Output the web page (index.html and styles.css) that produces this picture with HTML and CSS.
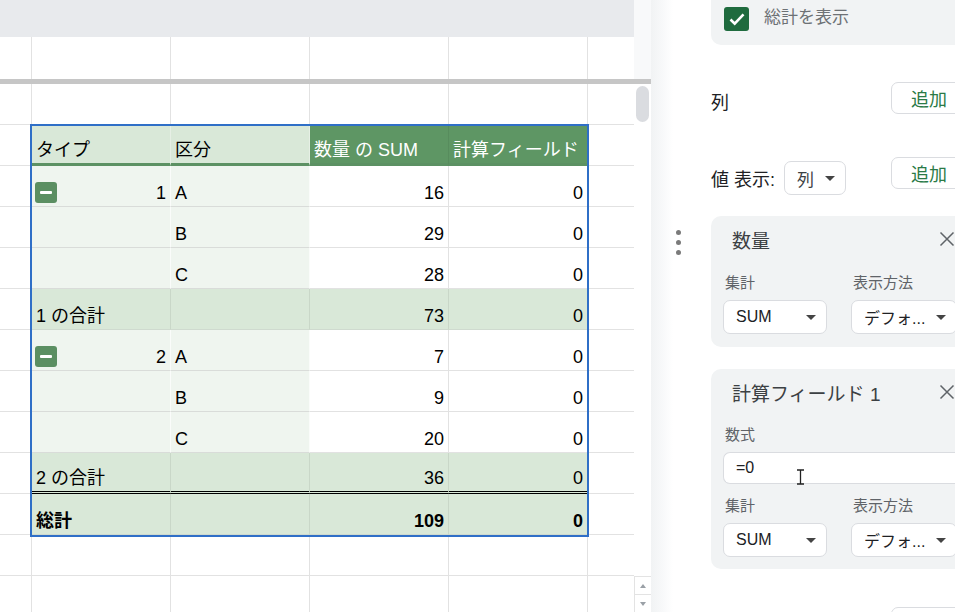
FILE: index.html
```html
<!DOCTYPE html>
<html lang="ja">
<head>
    <meta charset="UTF-8">
    <meta name="viewport" content="width=device-width, initial-scale=1.0">
    <title>ピボット テーブル</title>
    <link rel="stylesheet" href="styles.css">
</head>
<body>
    <div class="sheet">
        <div class="frozen">
            <div class="frozen-grid">
                <div class="band"></div>
                <div class="row first">
                    <div class="cell c0"></div>
                    <div class="cell c1"></div>
                    <div class="cell c2"></div>
                    <div class="cell c3"></div>
                    <div class="cell c4"></div>
                    <div class="cell c5"></div>
                </div>
            </div>
            <div class="scroll-gap"></div>
        </div>
        <div class="freeze-bar"></div>

        <div class="pane">
            <div class="grid">
                <div class="row">
                    <div class="cell c0"></div><div class="cell c1"></div><div class="cell c2"></div>
                    <div class="cell c3"></div><div class="cell c4"></div><div class="cell c5"></div>
                </div>

                <!-- pivot header -->
                <div class="row">
                    <div class="cell c0"></div>
                    <div class="cell c1 hl">タイプ</div>
                    <div class="cell c2 hl">区分</div>
                    <div class="cell c3 hd">数量 の SUM</div>
                    <div class="cell c4 hd">計算フィールド</div>
                    <div class="cell c5"></div>
                </div>

                <div class="row">
                    <div class="cell c0"></div>
                    <div class="cell c1 dim group"><span class="toggle"><i></i></span><span>1</span></div>
                    <div class="cell c2 dim">A</div>
                    <div class="cell c3 num">16</div>
                    <div class="cell c4 num">0</div>
                    <div class="cell c5"></div>
                </div>
                <div class="row">
                    <div class="cell c0"></div>
                    <div class="cell c1 dim"></div>
                    <div class="cell c2 dim">B</div>
                    <div class="cell c3 num">29</div>
                    <div class="cell c4 num">0</div>
                    <div class="cell c5"></div>
                </div>
                <div class="row">
                    <div class="cell c0"></div>
                    <div class="cell c1 dim"></div>
                    <div class="cell c2 dim">C</div>
                    <div class="cell c3 num">28</div>
                    <div class="cell c4 num">0</div>
                    <div class="cell c5"></div>
                </div>
                <div class="row">
                    <div class="cell c0"></div>
                    <div class="cell c1 sub">1 の合計</div>
                    <div class="cell c2 sub"></div>
                    <div class="cell c3 sub num">73</div>
                    <div class="cell c4 sub num">0</div>
                    <div class="cell c5"></div>
                </div>

                <div class="row">
                    <div class="cell c0"></div>
                    <div class="cell c1 dim group"><span class="toggle"><i></i></span><span>2</span></div>
                    <div class="cell c2 dim">A</div>
                    <div class="cell c3 num">7</div>
                    <div class="cell c4 num">0</div>
                    <div class="cell c5"></div>
                </div>
                <div class="row">
                    <div class="cell c0"></div>
                    <div class="cell c1 dim"></div>
                    <div class="cell c2 dim">B</div>
                    <div class="cell c3 num">9</div>
                    <div class="cell c4 num">0</div>
                    <div class="cell c5"></div>
                </div>
                <div class="row">
                    <div class="cell c0"></div>
                    <div class="cell c1 dim"></div>
                    <div class="cell c2 dim">C</div>
                    <div class="cell c3 num">20</div>
                    <div class="cell c4 num">0</div>
                    <div class="cell c5"></div>
                </div>
                <div class="row">
                    <div class="cell c0"></div>
                    <div class="cell c1 sub last-sub">2 の合計</div>
                    <div class="cell c2 sub last-sub"></div>
                    <div class="cell c3 sub last-sub num">36</div>
                    <div class="cell c4 sub last-sub num">0</div>
                    <div class="cell c5"></div>
                </div>
                <div class="row bold">
                    <div class="cell c0"></div>
                    <div class="cell c1 sub">総計</div>
                    <div class="cell c2 sub"></div>
                    <div class="cell c3 sub num">109</div>
                    <div class="cell c4 sub num">0</div>
                    <div class="cell c5"></div>
                </div>

                <div class="row">
                    <div class="cell c0"></div><div class="cell c1"></div><div class="cell c2"></div>
                    <div class="cell c3"></div><div class="cell c4"></div><div class="cell c5"></div>
                </div>
                <div class="row">
                    <div class="cell c0"></div><div class="cell c1"></div><div class="cell c2"></div>
                    <div class="cell c3"></div><div class="cell c4"></div><div class="cell c5"></div>
                </div>

                <div class="selection"></div>
            </div>

            <div class="vscroll">
                <div class="thumb"></div>
                <div class="arrows">
                    <span class="arrow up"></span>
                    <span class="arrow down"></span>
                </div>
            </div>
        </div>
    </div>

    <div class="sidebar">
        <div class="handle">
            <span></span><span></span><span></span>
        </div>

        <div class="panel">
            <div class="totals-card">
                <span class="checkbox">
                    <svg width="20" height="20" viewBox="0 0 20 20"><path d="M3.5 10.5l4.2 4.2 8.8-9.4" fill="none" stroke="#fff" stroke-width="2.6"/></svg>
                </span>
                <span class="totals-label">総計を表示</span>
            </div>

            <div class="section-row cols-row">
                <span class="section-title">列</span>
                <button class="add-btn">追加</button>
            </div>

            <div class="section-row values-row">
                <div class="values-left">
                    <span class="section-title">値 表示:</span>
                    <span class="select small">列
                        <svg class="caret" width="10" height="5" viewBox="0 0 10 5"><path d="M0 0h10L5 5z"/></svg>
                    </span>
                </div>
                <button class="add-btn">追加</button>
            </div>

            <div class="field-card">
                <div class="card-head">
                    <span class="card-title">数量</span>
                    <svg class="close" width="16" height="16" viewBox="0 0 16 16"><path d="M1.5 1.5L14.5 14.5M14.5 1.5L1.5 14.5" stroke="#5f6368" stroke-width="1.5"/></svg>
                </div>
                <div class="field-grid">
                    <span class="field-label">集計</span>
                    <span class="field-label">表示方法</span>
                    <span class="select">SUM
                        <svg class="caret" width="10" height="5" viewBox="0 0 10 5"><path d="M0 0h10L5 5z"/></svg>
                    </span>
                    <span class="select">デフォ...
                        <svg class="caret" width="10" height="5" viewBox="0 0 10 5"><path d="M0 0h10L5 5z"/></svg>
                    </span>
                </div>
            </div>

            <div class="field-card calc">
                <div class="card-head">
                    <span class="card-title">計算フィールド 1</span>
                    <svg class="close" width="16" height="16" viewBox="0 0 16 16"><path d="M1.5 1.5L14.5 14.5M14.5 1.5L1.5 14.5" stroke="#5f6368" stroke-width="1.5"/></svg>
                </div>
                <span class="field-label formula-label">数式</span>
                <div class="formula">=0
                    <svg class="ibeam" width="9" height="16" viewBox="0 0 9 16"><path d="M1 1h7M4.5 1v14M1 15h7" stroke="#222" stroke-width="1.3" fill="none"/></svg>
                </div>
                <div class="field-grid">
                    <span class="field-label">集計</span>
                    <span class="field-label">表示方法</span>
                    <span class="select">SUM
                        <svg class="caret" width="10" height="5" viewBox="0 0 10 5"><path d="M0 0h10L5 5z"/></svg>
                    </span>
                    <span class="select">デフォ...
                        <svg class="caret" width="10" height="5" viewBox="0 0 10 5"><path d="M0 0h10L5 5z"/></svg>
                    </span>
                </div>
            </div>

            <!-- next section's button, scrolled below the fold -->
            <div class="section-row filter-row">
                <button class="add-btn" aria-label="追加"></button>
            </div>
        </div>
    </div>
</body>
</html>
```

FILE: styles.css
```css
* {
    box-sizing: border-box;
}

body {
    margin: 0;
    width: 955px;
    height: 612px;
    overflow: hidden;
    display: flex;
    background: #fff;
    color: #000;
    font-family: "Liberation Sans", "Noto Sans CJK JP", sans-serif;
}

/* ---------- sheet ---------- */

.sheet {
    width: 651px;
    flex: none;
    display: flex;
    flex-direction: column;
}

.frozen {
    display: flex;
}

.frozen-grid {
    width: 634px;
}

.scroll-gap {
    width: 17px;
    background: #f8f9fa;
}

.band {
    height: 37px;
    background: #e8eaed;
}

.freeze-bar {
    height: 5px;
    background: #c6c6c6;
}

.pane {
    display: flex;
    flex: 1;
    min-height: 0;
}

.grid {
    width: 634px;
    position: relative;
    overflow: hidden;
}

.row {
    display: flex;
    height: 41px;
}

.row.first {
    height: 42px;
}

.row.first .cell {
    border-bottom: none;
}

.cell {
    flex: none;
    height: 100%;
    display: flex;
    align-items: flex-end;
    padding: 0 4px 3px 4px;
    border-right: 1px solid #e2e2e2;
    border-bottom: 1px solid #e2e2e2;
    font-size: 18px;
    line-height: 20px;
    white-space: nowrap;
    overflow: hidden;
}

.c0 { width: 32px; }
.c1, .c2, .c3, .c4 { width: 139px; }
.c5 { width: 46px; border-right: none; }

.num {
    justify-content: flex-end;
}

.hl {
    background: #d9e8d8;
    border-right-color: #e6efe5;
    border-bottom: 3px solid #5c9163;
}

.hd {
    background: #5e9664;
    color: #fff;
    border-right-color: #578c5d;
    border-bottom: 3px solid #5c9163;
}

.dim {
    background: #eff5ef;
    border-right-color: #fafcfa;
    border-bottom-color: #d9dcd9;
}

.sub {
    background: #d9e8d8;
    border-right-color: #c9d7c8;
    border-bottom-color: #cfdacf;
}

.sub.last-sub {
    border-bottom: 3px double #000;
}

.bold {
    font-weight: 700;
}

.group {
    justify-content: space-between;
    padding-left: 3px;
}

.toggle {
    margin-bottom: 0;
    width: 22px;
    height: 21px;
    border-radius: 3px;
    background: #5b8f62;
    display: flex;
    align-items: center;
    justify-content: center;
}

.toggle i {
    width: 12px;
    height: 3px;
    border-radius: 1px;
    background: #fff;
}

.selection {
    position: absolute;
    left: 30px;
    top: 40px;
    width: 559px;
    height: 413px;
    border: 2px solid #2f6fc7;
    pointer-events: none;
}

.vscroll {
    width: 17px;
    display: flex;
    flex-direction: column;
    background: #fff;
}

.thumb {
    margin: 2px 0 0 2px;
    width: 13px;
    height: 36px;
    border-radius: 7px;
    background: #dadce0;
}

.arrows {
    margin-top: auto;
    height: 36px;
    border-top: 1px solid #e3e3e3;
    border-left: 1px solid #e3e3e3;
    display: flex;
    flex-direction: column;
}

.arrow {
    flex: 1;
    position: relative;
}

.arrow.up {
    border-bottom: 1px solid #e3e3e3;
}

.arrow::after {
    content: "";
    position: absolute;
    left: 5px;
    top: 7px;
    border-left: 3px solid transparent;
    border-right: 3px solid transparent;
}

.arrow.up::after {
    border-bottom: 4px solid #9aa0a6;
}

.arrow.down::after {
    border-top: 4px solid #9aa0a6;
}

/* ---------- sidebar ---------- */

.sidebar {
    flex: 1;
    display: flex;
    overflow: hidden;
    background: linear-gradient(to right, #f1f3f4 0, #f8f9fa 12px, #fff 22px);
}

.handle {
    width: 60px;
    flex: none;
    padding: 230px 0 0 25px;
    display: flex;
    flex-direction: column;
    gap: 5px;
}

.handle span {
    width: 5px;
    height: 5px;
    border-radius: 50%;
    background: #7a7a7a;
}

.panel {
    width: 270px;
    flex: none;
    color: #202124;
}

.totals-card {
    height: 45px;
    padding: 7px 0 0 13px;
    display: flex;
    align-items: flex-start;
    gap: 15px;
    background: #f1f3f4;
    border-radius: 0 0 0 10px;
}

.checkbox {
    width: 25px;
    height: 24px;
    border-radius: 3px;
    background: #1f6b3e;
    display: flex;
    align-items: center;
    justify-content: center;
}

.totals-label {
    font-size: 17px;
    line-height: 22px;
    color: #6d7175;
}

.section-row {
    display: flex;
    justify-content: space-between;
}

.cols-row {
    margin-top: 37px;
    align-items: center;
}

.section-title {
    font-size: 18px;
    color: #202124;
}

.cols-row .section-title {
    padding-top: 5px;
}

.add-btn {
    width: 90px;
    height: 32px;
    padding: 0 0 0 19px;
    text-align: left;
    font: inherit;
    font-size: 18px;
    color: #2b7a47;
    background: #fff;
    border: 1px solid #dadce0;
    border-radius: 7px;
}

.values-row {
    margin-top: 43px;
    align-items: flex-start;
}

.values-left {
    margin-top: 4px;
    display: flex;
    align-items: center;
    gap: 9px;
}

.select {
    height: 34px;
    display: flex;
    align-items: center;
    justify-content: space-between;
    padding: 0 10px 0 12px;
    background: #fff;
    border: 1px solid #dadce0;
    border-radius: 7px;
    font-size: 16px;
    color: #202124;
}

.select.small {
    width: 62px;
    font-size: 17px;
    color: #3c4043;
}

.caret {
    fill: #444;
}

.field-card {
    margin-top: 21px;
    padding: 12px 0 13px 12px;
    background: #f1f3f4;
    border-radius: 10px 0 0 10px;
}

.field-card.calc {
    margin-top: 22px;
    padding-bottom: 12px;
}

.card-head {
    height: 22px;
    display: flex;
    align-items: center;
    justify-content: space-between;
    padding: 0 26px 0 9px;
}

.card-title {
    font-size: 19px;
    color: #3c4043;
}

.field-grid {
    margin-top: 24px;
    display: grid;
    grid-template-columns: 104px 106px;
    column-gap: 24px;
    row-gap: 8px;
}

.calc .field-grid {
    margin-top: 13px;
}

.field-label {
    display: block;
    font-size: 15px;
    line-height: 18px;
    color: #5f6368;
    padding-left: 2px;
}

.formula-label {
    margin-top: 23px;
}

.formula {
    position: relative;
    margin-top: 8px;
    height: 32px;
    display: flex;
    align-items: center;
    padding-left: 12px;
    background: #fff;
    border: 1px solid #dadce0;
    border-right: none;
    border-radius: 7px 0 0 7px;
    font-size: 16px;
    color: #202124;
}

.ibeam {
    position: absolute;
    left: 72px;
    top: 16px;
}

.filter-row {
    margin-top: 38px;
    justify-content: flex-end;
}
```
